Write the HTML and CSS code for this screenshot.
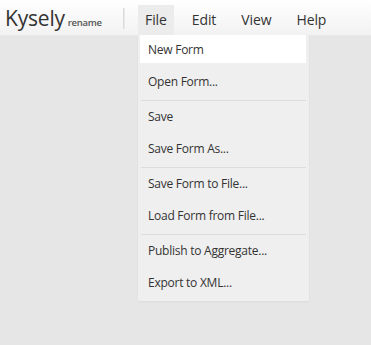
FILE: index.html
```html
<!DOCTYPE html>
<html>
<head>
<meta charset="utf-8">
<link rel="stylesheet" href="styles.css">
</head>
<body>
<header class="topbar">
  <div class="brand">
    <span class="title">Kysely</span>
    <span class="rename">rename</span>
  </div>
  <div class="divider"></div>
  <nav class="menubar">
    <div class="menu open">
      <span class="menu-label">File</span>
      <ul class="dropdown">
        <li class="item active">New Form</li>
        <li class="item">Open Form...</li>
        <li class="sep"></li>
        <li class="item">Save</li>
        <li class="item">Save Form As...</li>
        <li class="sep"></li>
        <li class="item">Save Form to File...</li>
        <li class="item">Load Form from File...</li>
        <li class="sep"></li>
        <li class="item">Publish to Aggregate...</li>
        <li class="item">Export to XML...</li>
      </ul>
    </div>
    <div class="menu"><span class="menu-label">Edit</span></div>
    <div class="menu"><span class="menu-label">View</span></div>
    <div class="menu"><span class="menu-label">Help</span></div>
  </nav>
</header>
</body>
</html>
```
FILE: styles.css
```css
html, body {
  margin: 0;
  padding: 0;
  height: 100%;
}
body {
  background: #e6e6e6;
  font-family: "Open Sans", "Segoe UI", sans-serif;
  color: #333;
}
.topbar {
  display: flex;
  align-items: stretch;
  height: 36px;
  background: linear-gradient(#ffffff, #f2f2f2);
  border-bottom: 1px solid #e9e9e9;
  box-sizing: border-box;
}
.brand {
  display: flex;
  align-items: baseline;
  padding: 4px 0 0 5px;
  width: 119px;
  box-sizing: border-box;
}
.title {
  font-size: 21px;
  color: #333;
  letter-spacing: -0.2px;
}
.rename {
  font-size: 9.5px;
  font-weight: 600;
  color: #555;
  margin-left: 3px;
  letter-spacing: -0.3px;
}
.divider {
  width: 2px;
  margin: 8px 0 6px 4px;
  background: linear-gradient(to right, #d4d4d4, #f0f0f0);
}
.menubar {
  display: flex;
  margin-left: 13px;
  padding-top: 5px;
}
.menu {
  position: relative;
  padding: 5px 7px 0;
  margin-right: 11px;
  font-size: 14px;
  color: #333;
  letter-spacing: -0.1px;
}
.menu.open {
  background: #ececec;
}
.dropdown {
  position: absolute;
  top: 30px;
  left: 0;
  margin: 0;
  padding: 0 0 1px;
  list-style: none;
  width: 171px;
  background: #efefef;
  box-shadow: 0 1px 2px rgba(0,0,0,0.05);
}
.item {
  height: 32px;
  line-height: 29px;
  padding: 0 10px;
  font-size: 12px;
  letter-spacing: -0.25px;
  color: #333;
  white-space: nowrap;
}
.item.active {
  background: linear-gradient(#ffffff 28px, transparent 28px);
  margin: 0 3px 0 2px;
  padding-left: 8px;
}
.sep {
  height: 1px;
  background: #dcdcdc;
  margin: 1px 3px 1px;
}
```
